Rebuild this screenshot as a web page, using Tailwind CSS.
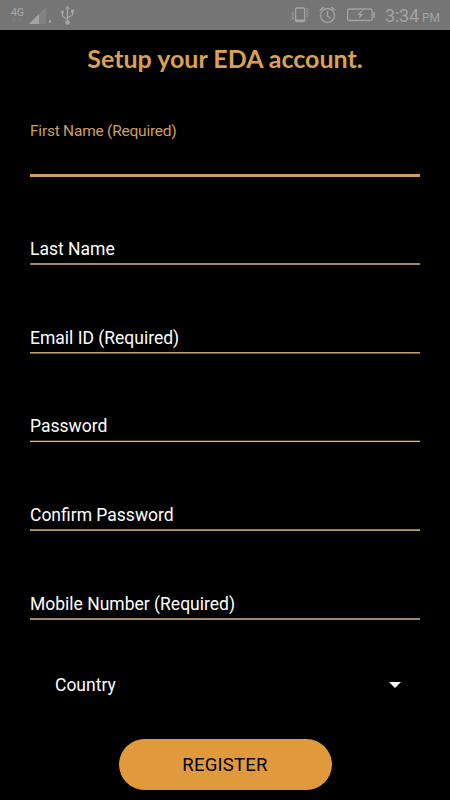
<!DOCTYPE html>
<html lang="en">
<head>
<meta charset="utf-8">
<title>Setup your EDA account</title>
<script src="https://cdn.jsdelivr.net/npm/@tailwindcss/browser@4"></script>
</head>
<body class="bg-black">
<div class="w-[450px] h-[800px] overflow-hidden bg-black flex flex-col font-['Roboto',sans-serif] text-white">
  <header class="h-[30px] shrink-0 bg-[#757575] text-[#a3a3a3] flex items-center justify-between px-[10px]">
    <svg class="w-[66px] h-[30px]" viewBox="10 0 66 30" fill="none">
      <text x="11" y="16" font-size="11" fill="#a8a8a8" textLength="13" lengthAdjust="spacingAndGlyphs">4G</text>
      <path d="M14 22v-4m-1.500 1.500L14 18l1.500 1.500M20 18v4m-1.500-1.500L20 22l1.500-1.500" stroke="#7e7e7e" stroke-width="1"/>
      <path d="M29 24L46 7v17z" fill="#828282"/>
      <path d="M29 24L39 14v10z" fill="#a3a3a3"/>
      <path d="M49 20h2v3h-2z" fill="#a3a3a3"/>
      <path d="M67.500 8v14M67.500 19.500l-5-3v-3.500M67.500 18l5-3v-3.500" stroke="#a3a3a3" stroke-width="1.300"/>
      <path d="M65.300 9l2.200-3.500L69.700 9zM71 9.500h3v3h-3z" fill="#a3a3a3"/>
      <circle cx="62.500" cy="12" r="1.600" fill="#a3a3a3"/>
      <circle cx="67.500" cy="22.500" r="2.300" fill="#a3a3a3"/>
    </svg>
    <div class="flex items-center">
      <svg class="w-[86px] h-[30px]" viewBox="290 0 86 30" fill="none" stroke="#a3a3a3" stroke-width="1.300">
        <rect x="295.600" y="8" width="9" height="13.500" rx="1"/>
        <path d="M295.600 20.500h9" stroke-width="2"/>
        <path d="M293.500 12l-1.500 1.500 1.500 1.500-1.500 1.500 1.500 1.500-1.500 1.500M306.500 8l1.500 1.500-1.500 1.500 1.500 1.500-1.500 1.500 1.500 1.500-1.500 1.500" stroke-width="1"/>
        <circle cx="327.500" cy="15.500" r="7"/>
        <path d="M327.500 11v5l3 2.500M319.700 10.500l4-3.500M331.300 7l4 3.500"/>
        <rect x="347.600" y="9" width="24.500" height="11.500" rx="1.500"/>
        <path d="M374 12v6" stroke-width="1.500"/>
        <path d="M361.500 10.500L357 15h3l-1.500 4 5-5h-3.500l3-3.500z" fill="#a3a3a3" stroke="none"/>
      </svg>
      <div class="w-[55px] ml-[9px] pt-[3px] flex items-baseline whitespace-nowrap leading-[30px]"><span class="text-[18px] tracking-[-0.200px]">3:34</span><span class="text-[12px] ml-[3px]">PM</span></div>
    </div>
  </header>
  <main class="flex flex-col px-[30px]">
    <h1 class="h-[56px] mb-[2px] leading-[56px] text-center font-['Lato',sans-serif] font-bold text-[25px] text-[#dba152] whitespace-nowrap">Setup your EDA account.</h1>
    <form class="flex flex-col">
      <div class="h-[89px] flex flex-col border-b-[3px] border-[#d0a062]">
        <label class="mt-[33px] leading-[20px] text-[15.500px] tracking-[-0.230px] text-[#cf9f62]">First Name (Required)</label>
      </div>
      <div class="h-[88px] flex flex-col justify-end"><label class="leading-[22px] text-[17.500px] mb-[3px]">Last Name</label><div class="h-[2px] border-t border-[#a38766] bg-[#a38766]"></div></div>
      <div class="h-[89px] flex flex-col justify-end"><label class="leading-[22px] text-[17.500px] mb-[3px]">Email ID (Required)</label><div class="h-[2px] border-t border-[#c0a070] bg-[#745838]"></div></div>
      <div class="h-[88px] flex flex-col justify-end"><label class="leading-[22px] text-[17.500px] mb-[3px]">Password</label><div class="h-[2px] border-t border-[#4e3012] bg-[#e0bd8c]"></div></div>
      <div class="h-[89px] flex flex-col justify-end"><label class="leading-[22px] text-[17.500px] mb-[3px]">Confirm Password</label><div class="h-[2px] border-t border-[#8d7860] bg-[#b09a78]"></div></div>
      <div class="h-[89px] flex flex-col justify-end"><label class="leading-[22px] text-[17.500px] mb-[3px]">Mobile Number (Required)</label><div class="h-[2px] border-t border-[#a38766] bg-[#a38766]"></div></div>
      <div class="mt-[54px] h-[22px] flex items-center justify-between pl-[25px] pr-[19px]">
        <span class="leading-[22px] text-[17.500px]">Country</span>
        <svg class="w-[12px] h-[6px]" viewBox="0 0 12 6"><path d="M0 0h12L6 6z" fill="#fff"/></svg>
      </div>
      <button type="button" class="mt-[43px] self-center w-[213px] h-[51px] rounded-full bg-[#e09a3c] text-black text-[18.500px] tracking-[0.250px] leading-[49px] pt-[2px]">REGISTER</button>
    </form>
  </main>
</div>
</body>
</html>
